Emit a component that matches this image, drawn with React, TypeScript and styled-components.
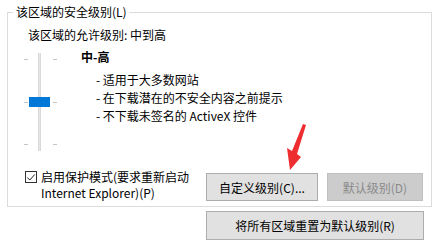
import { createGlobalStyle, styled } from "styled-components";

const GlobalStyle = createGlobalStyle`
  html, body {
    margin: 0;
    padding: 0;
    background: #ffffff;
  }
  body {
    font-family: "Noto Sans CJK SC", "Noto Sans", sans-serif;
    font-size: 12px;
    color: #000000;
  }
`;

const bullets = [
  "适用于大多数网站",
  "在下载潜在的不安全内容之前提示",
  "不下载未签名的 ActiveX 控件",
];

export default function App() {
  return (
    <>
      <GlobalStyle />
      <Page>
        <Group>
          <Legend>该区域的安全级别(L)</Legend>
          <Allowed>该区域的允许级别: 中到高</Allowed>

          <LevelRow>
            <Slider>
              <Track />
              <Tick $top={6} $side="left" />
              <Tick $top={6} $side="right" />
              <Tick $top={49} $side="left" />
              <Tick $top={49} $side="right" />
              <Tick $top={91} $side="left" />
              <Tick $top={91} $side="right" />
              <Thumb />
            </Slider>
            <Description>
              <LevelTitle>中-高</LevelTitle>
              <BulletList>
                {bullets.map((b) => (
                  <Bullet key={b}>- {b}</Bullet>
                ))}
              </BulletList>
            </Description>
          </LevelRow>

          <BottomRow>
            <CheckLabel>
              <CheckBox>
                <svg width="11" height="11" viewBox="0 0 11 11">
                  <path d="M1.5 5.5 L4.2 8.3 L9.6 2.2" fill="none" stroke="#222" strokeWidth="1.1" />
                </svg>
              </CheckBox>
              <CheckText>启用保护模式(要求重新启动 Internet Explorer)(P)</CheckText>
            </CheckLabel>
            <Buttons>
              <Button $width={112}>自定义级别(C)...</Button>
              <Button $width={96} disabled>
                默认级别(D)
              </Button>
            </Buttons>
          </BottomRow>
        </Group>

        <Footer>
          <Button $width={218} $height={29}>
            将所有区域重置为默认级别(R)
          </Button>
        </Footer>

        <Arrow width="26" height="50" viewBox="0 0 26 50">
          <polygon points="19,2 22,3 13,32 17,35 6,48 3,26 8,29" fill="#ee2d30" />
        </Arrow>
      </Page>
    </>
  );
}

const Page = styled.div`
  position: relative;
  display: flex;
  flex-direction: column;
  padding: 5px 0 0 7px;
  width: 437px;
  height: 247px;
  box-sizing: border-box;
`;

const Group = styled.fieldset`
  display: flex;
  flex-direction: column;
  box-sizing: border-box;
  width: 425px;
  margin: 0;
  padding: 8px 8px 5px 0;
  border: 1px solid #dcdcdc;
`;

const Legend = styled.legend`
  margin-left: 5px;
  padding: 0 2px 0 3px;
  line-height: 14px;
`;

const Allowed = styled.div`
  margin-left: 20px;
  line-height: 16px;
`;

const LevelRow = styled.div`
  display: flex;
  align-items: flex-start;
  gap: 24px;
  margin-top: 7px;
  margin-left: 16px;
`;

const Slider = styled.div`
  position: relative;
  width: 33px;
  height: 98px;
  margin-top: 3px;
  flex-shrink: 0;
`;

const Track = styled.div`
  position: absolute;
  left: 14px;
  top: 0;
  bottom: 0;
  width: 3px;
  background: #e7e7e7;
  border-left: 1px solid #d9d9d9;
  border-right: 1px solid #d9d9d9;
  box-sizing: border-box;
`;

const Tick = styled.div<{ $top: number; $side: "left" | "right" }>`
  position: absolute;
  top: ${(p) => p.$top}px;
  ${(p) => (p.$side === "left" ? "left: 0;" : "right: 0;")}
  width: 4px;
  height: 1px;
  background: #c4c4c4;
`;

const Thumb = styled.div`
  position: absolute;
  left: 5px;
  top: 44px;
  width: 21px;
  height: 10px;
  background: #0078d7;
`;

const Description = styled.div`
  display: flex;
  flex-direction: column;
`;

const LevelTitle = styled.div`
  font-weight: 700;
  line-height: 14px;
`;

const BulletList = styled.div`
  display: flex;
  flex-direction: column;
  margin-top: 7px;
  margin-left: 15px;
`;

const Bullet = styled.div`
  line-height: 18px;
  white-space: nowrap;
`;

const BottomRow = styled.div`
  display: flex;
  align-items: flex-end;
  justify-content: space-between;
  margin-top: 18px;
  padding-left: 17px;
`;

const CheckLabel = styled.label`
  display: flex;
  align-items: flex-start;
  gap: 4px;
`;

const CheckBox = styled.span`
  display: flex;
  align-items: center;
  justify-content: center;
  width: 12px;
  height: 12px;
  margin-top: 2px;
  border: 1px solid #333333;
  box-sizing: border-box;
  background: #ffffff;
  flex-shrink: 0;
`;

const CheckText = styled.span`
  width: 160px;
  line-height: 16px;
`;

const Buttons = styled.div`
  display: flex;
  gap: 9px;
`;

const Button = styled.button<{ $width: number; $height?: number }>`
  width: ${(p) => p.$width}px;
  height: ${(p) => p.$height ?? 28}px;
  box-sizing: border-box;
  padding: 0;
  font-family: "Noto Sans CJK SC", "Noto Sans", sans-serif;
  font-size: 12px;
  color: #000000;
  background: #e1e1e1;
  border: 1px solid #adadad;

  &:disabled {
    color: #8a8a8a;
    background: #cccccc;
    border-color: #bfbfbf;
  }
`;

const Footer = styled.div`
  display: flex;
  justify-content: flex-end;
  width: 425px;
  margin-top: 4px;
  padding-right: 8px;
  box-sizing: border-box;
`;

const Arrow = styled.svg`
  position: absolute;
  left: 284px;
  top: 122px;
`;
